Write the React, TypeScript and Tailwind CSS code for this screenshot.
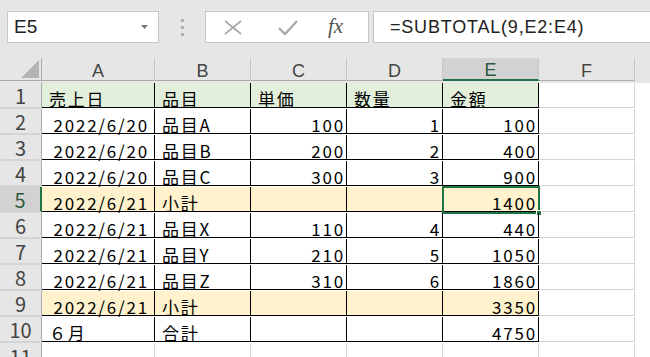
type Cell = { v: string; r?: boolean };

const font = { fontFamily: '"Noto Sans CJK JP", "Noto Sans", sans-serif' };
const latin = { fontFamily: '"Liberation Sans", "Noto Sans CJK JP", sans-serif' };

const rows: { cells: Cell[]; bg?: string }[] = [
  { cells: [{ v: "売上日" }, { v: "品目" }, { v: "単価" }, { v: "数量" }, { v: "金額" }], bg: "bg-[#e2efda]" },
  { cells: [{ v: "2022/6/20", r: true }, { v: "品目A" }, { v: "100", r: true }, { v: "1", r: true }, { v: "100", r: true }] },
  { cells: [{ v: "2022/6/20", r: true }, { v: "品目B" }, { v: "200", r: true }, { v: "2", r: true }, { v: "400", r: true }] },
  { cells: [{ v: "2022/6/20", r: true }, { v: "品目C" }, { v: "300", r: true }, { v: "3", r: true }, { v: "900", r: true }] },
  { cells: [{ v: "2022/6/21", r: true }, { v: "小計" }, { v: "" }, { v: "" }, { v: "1400", r: true }], bg: "bg-[#fff2cc]" },
  { cells: [{ v: "2022/6/21", r: true }, { v: "品目X" }, { v: "110", r: true }, { v: "4", r: true }, { v: "440", r: true }] },
  { cells: [{ v: "2022/6/21", r: true }, { v: "品目Y" }, { v: "210", r: true }, { v: "5", r: true }, { v: "1050", r: true }] },
  { cells: [{ v: "2022/6/21", r: true }, { v: "品目Z" }, { v: "310", r: true }, { v: "6", r: true }, { v: "1860", r: true }] },
  { cells: [{ v: "2022/6/21", r: true }, { v: "小計" }, { v: "" }, { v: "" }, { v: "3350", r: true }], bg: "bg-[#fff2cc]" },
  { cells: [{ v: "６月" }, { v: "合計" }, { v: "" }, { v: "" }, { v: "4750", r: true }] },
];

const grid = "grid grid-cols-[42px_113px_96px_96px_96px_96px_96px]";

function FormulaBar() {
  return (
    <div className="flex h-[58px] items-start bg-[#e6e6e6] pl-[7px] pt-[11px]">
      <div className="flex h-[32px] w-[152px] items-center justify-between border border-[#c6c6c6] bg-white pl-[6px] pr-[10px]">
        <span className="text-[19px] text-[#222]" style={latin}>E5</span>
        <svg width="7" height="4" viewBox="0 0 7 4"><polygon points="0,0 7,0 3.5,4" fill="#777" /></svg>
      </div>
      <div className="flex h-[32px] w-[46px] flex-col items-center justify-center gap-[4px]">
        <span className="h-[3px] w-[3px] bg-[#b0b0b0]" />
        <span className="h-[3px] w-[3px] bg-[#b0b0b0]" />
        <span className="h-[3px] w-[3px] bg-[#b0b0b0]" />
      </div>
      <div className="flex h-[32px] w-[164px] items-center border border-[#c6c6c6] bg-white pl-[18px]">
        <svg width="18" height="15" viewBox="0 0 18 15">
          <path d="M1 1 L17 14 M17 1 L1 14" stroke="#aaa" strokeWidth="1.8" fill="none" />
        </svg>
        <svg className="ml-[36px]" width="20" height="15" viewBox="0 0 20 15">
          <path d="M1 8 L7 14 L19 1" stroke="#aaa" strokeWidth="2.4" fill="none" />
        </svg>
        <span className="ml-[30px] text-[21px] italic text-[#555]" style={{ fontFamily: '"Liberation Serif", serif' }}>fx</span>
      </div>
      <div className="ml-[4px] flex h-[32px] flex-1 items-center border border-r-0 border-[#c6c6c6] bg-white pl-[16px]">
        <span className="text-[18px] tracking-[0.8px] text-[#222]" style={latin}>=SUBTOTAL(9,E2:E4)</span>
      </div>
    </div>
  );
}

export default function App() {
  return (
    <div className="h-[357px] w-[650px] overflow-hidden bg-white" style={font}>
      <FormulaBar />
      <div className={`${grid} h-[25px] bg-[#e6e6e6] text-[18px] text-[#444]`} style={latin}>
        <div className="flex items-end justify-end border-r border-b border-[#ababab] pb-[2px] pr-[2px]">
          <svg width="18" height="18" viewBox="0 0 18 18"><polygon points="18,0 18,18 0,18" fill="#b4b4b4" /></svg>
        </div>
        {["A", "B", "C", "D", "E", "F", "G"].map((c) => (
          <div
            key={c}
            className={
              c === "E"
                ? "flex items-center justify-center border-r border-b-2 border-r-[#c6c6c6] border-b-[#217346] bg-[#d2d2d2] pt-[3px] leading-none text-[#2c5a3b]"
                : "flex items-center justify-center border-r border-b border-r-[#c6c6c6] border-b-[#ababab] pt-[3px] leading-none"
            }
          >
            {c}
          </div>
        ))}
      </div>
      {rows.map((row, i) => (
        <div key={i} className={`${grid} h-[26px]`}>
          <div
            className={
              i === 4
                ? "flex items-center justify-center border-r-2 border-b border-r-[#217346] border-b-[#d4d4d4] bg-[#d2d2d2] pt-[3px] text-[20px] leading-none text-[#2c5a3b]"
                : "flex items-center justify-center border-r border-b border-r-[#ababab] border-b-[#d4d4d4] bg-[#e6e6e6] pt-[3px] text-[20px] leading-none text-[#444]"
            }
          >
            {i + 1}
          </div>
          {row.cells.map((c, j) => (
            <div
              key={j}
              className={`relative flex items-end border-r border-b border-black pb-[2px] text-[17px] leading-[12px] tracking-[1.8px] text-black ${row.bg ?? ""} ${c.r ? (j === 0 ? "justify-end pr-[5px]" : "justify-end pr-[1px]") : "justify-start pl-[7px]"}`}
            >
              {c.v}
              {i === 4 && j === 4 && (
                <div className="absolute -left-[1px] -top-[1px] h-[28px] w-[98px] border-2 border-[#217346]">
                  <div className="absolute -bottom-[4px] -right-[4px] h-[6px] w-[6px] border border-white bg-[#217346]" />
                </div>
              )}
            </div>
          ))}
          <div className="border-r border-b border-[#d4d4d4]" />
          <div className="border-r border-b border-[#d4d4d4]" />
        </div>
      ))}
      <div className={`${grid} h-[26px]`}>
        <div className="flex items-center justify-center border-r border-[#ababab] bg-[#e6e6e6] pt-[3px] text-[20px] leading-none text-[#444]">11</div>
        {[0, 1, 2, 3, 4, 5, 6].map((k) => (
          <div key={k} className="border-r border-[#d4d4d4]" />
        ))}
      </div>
    </div>
  );
}
